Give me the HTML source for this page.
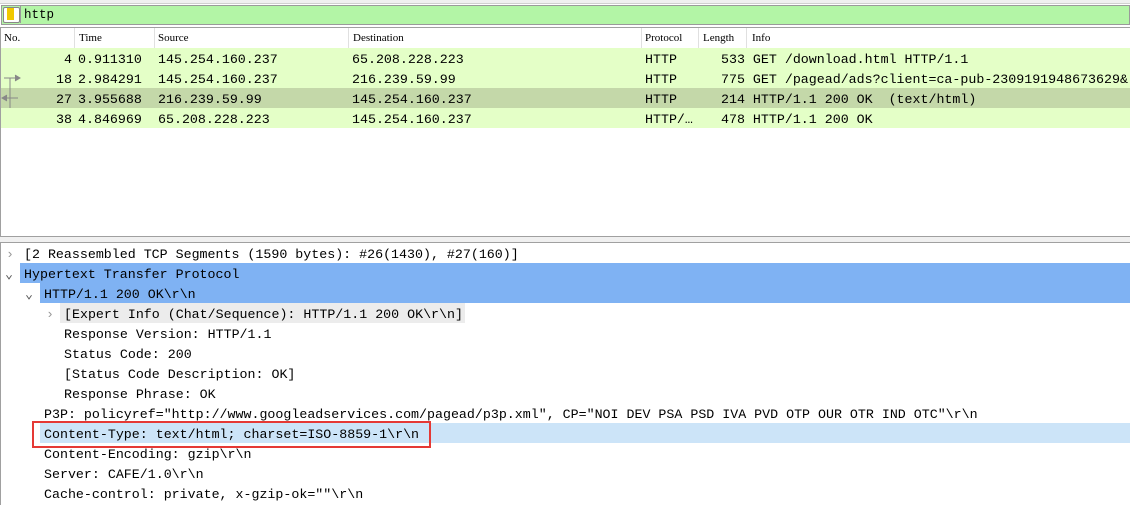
<!DOCTYPE html><html><head><style>
body{margin:0;width:1130px;height:505px;overflow:hidden;background:#fff;font-family:"Liberation Mono",monospace;font-size:13.3px;color:#000;position:relative}
.a{position:absolute}
.mono{font-family:"Liberation Mono",monospace;font-size:13.3px}
.mono span{white-space:pre}
.r{position:relative;height:20px}
.hd{font-family:"Liberation Serif","Noto Serif CJK SC",serif;font-size:11px}
</style></head><body>
<div class="a" style="left:0;top:0;width:1130px;height:3px;background:#f0f0f0;border-bottom:1px solid #d0d0d0"></div>
<div class="a" style="left:1px;top:5px;width:1127px;height:18px;background:#b3f5a6;border:1px solid #9a9a9a"></div>
<div class="a" style="left:3px;top:7px;width:15px;height:14px;background:#fff;border:1px solid #888;border-radius:2px"></div>
<div class="a" style="left:7px;top:8px;width:7px;height:12px;background:#f0c800"></div>
<div class="a" style="left:20px;top:6px;width:1px;height:17px;background:#999"></div>
<div class="a mono" style="left:24px;top:7px;line-height:17px;font-size:12.5px"><span>http</span></div>
<div class="a" style="left:0;top:27px;width:1130px;height:210px;border-top:1px solid #a0a0a0;border-left:1px solid #a0a0a0;box-sizing:border-box"></div>
<div class="a hd" style="left:0;top:28px;width:1130px;height:20px;line-height:20px">
<span class="a" style="left:4px">No.</span><span class="a" style="left:79px">Time</span><span class="a" style="left:158px">Source</span><span class="a" style="left:353px">Destination</span><span class="a" style="left:645px">Protocol</span><span class="a" style="left:703px">Length</span><span class="a" style="left:752px">Info</span>
<span class="a" style="left:74px;top:0;width:1px;height:20px;background:#e0e0e0"></span><span class="a" style="left:154px;width:1px;height:20px;background:#e0e0e0"></span><span class="a" style="left:348px;width:1px;height:20px;background:#e0e0e0"></span><span class="a" style="left:641px;width:1px;height:20px;background:#e0e0e0"></span><span class="a" style="left:698px;width:1px;height:20px;background:#e0e0e0"></span><span class="a" style="left:746px;width:1px;height:20px;background:#e0e0e0"></span>
</div>
<div class="a" style="left:1px;top:48px;width:1129px;height:80px;background:#e4ffc7"></div>
<div class="a" style="left:1px;top:88px;width:1129px;height:20px;background:#c4d8a9"></div>
<div class="a mono" style="left:0;top:50px;line-height:20px;width:1130px"><div class="r"><span class="a" style="right:1058px">4</span><span class="a" style="left:78px">0.911310</span><span class="a" style="left:158px">145.254.160.237</span><span class="a" style="left:352px">65.208.228.223</span><span class="a" style="left:645px">HTTP</span><span class="a" style="left:721px">533 GET /download.html HTTP/1.1</span></div><div class="r"><span class="a" style="right:1058px">18</span><span class="a" style="left:78px">2.984291</span><span class="a" style="left:158px">145.254.160.237</span><span class="a" style="left:352px">216.239.59.99</span><span class="a" style="left:645px">HTTP</span><span class="a" style="left:721px">775 GET /pagead/ads?client=ca-pub-2309191948673629&amp;</span></div><div class="r"><span class="a" style="right:1058px">27</span><span class="a" style="left:78px">3.955688</span><span class="a" style="left:158px">216.239.59.99</span><span class="a" style="left:352px">145.254.160.237</span><span class="a" style="left:645px">HTTP</span><span class="a" style="left:721px">214 HTTP/1.1 200 OK  (text/html)</span></div><div class="r"><span class="a" style="right:1058px">38</span><span class="a" style="left:78px">4.846969</span><span class="a" style="left:158px">65.208.228.223</span><span class="a" style="left:352px">145.254.160.237</span><span class="a" style="left:645px">HTTP/…</span><span class="a" style="left:721px">478 HTTP/1.1 200 OK</span></div></div>
<svg class="a" style="left:0;top:68px" width="22" height="40"><g stroke="#888" fill="none"><path d="M10 10V40M4 10H18"/><path d="M15 7L20 10L15 13" fill="#888"/><path d="M3 30H18M7 27L2 30L7 33" fill="#888"/></g></svg>
<div class="a" style="left:0;top:236px;width:1130px;height:5px;background:#f0f0f0;border-top:1px solid #a0a0a0;border-bottom:1px solid #a0a0a0"></div>
<div class="a" style="left:0;top:242px;width:1px;height:263px;background:#a0a0a0"></div>
<div class="a" style="left:20px;top:263px;width:1110px;height:20px;background:#7fb2f3"></div>
<div class="a" style="left:40px;top:283px;width:1090px;height:20px;background:#7fb2f3"></div>
<div class="a" style="left:60px;top:303px;width:405px;height:20px;background:#ececec"></div>
<div class="a" style="left:40px;top:423px;width:1090px;height:20px;background:#cce4f8"></div>
<div class="a" style="left:32px;top:421px;width:395px;height:23px;border:2px solid #e53935"></div>
<div class="a mono" style="left:0;top:245px;line-height:20px;width:1130px"><div class="r"><span class="a" style="left:6px;color:#999">›</span><span class="a" style="left:24px">[2 Reassembled TCP Segments (1590 bytes): #26(1430), #27(160)]</span></div><div class="r"><span class="a" style="left:5px;color:#555">⌄</span><span class="a" style="left:24px">Hypertext Transfer Protocol</span></div><div class="r"><span class="a" style="left:25px;color:#555">⌄</span><span class="a" style="left:44px">HTTP/1.1 200 OK\r\n</span></div><div class="r"><span class="a" style="left:46px;color:#999">›</span><span class="a" style="left:64px">[Expert Info (Chat/Sequence): HTTP/1.1 200 OK\r\n]</span></div><div class="r"><span class="a" style="left:64px">Response Version: HTTP/1.1</span></div><div class="r"><span class="a" style="left:64px">Status Code: 200</span></div><div class="r"><span class="a" style="left:64px">[Status Code Description: OK]</span></div><div class="r"><span class="a" style="left:64px">Response Phrase: OK</span></div><div class="r"><span class="a" style="left:44px">P3P: policyref="http://www.googleadservices.com/pagead/p3p.xml", CP="NOI DEV PSA PSD IVA PVD OTP OUR OTR IND OTC"\r\n</span></div><div class="r"><span class="a" style="left:44px">Content-Type: text/html; charset=ISO-8859-1\r\n</span></div><div class="r"><span class="a" style="left:44px">Content-Encoding: gzip\r\n</span></div><div class="r"><span class="a" style="left:44px">Server: CAFE/1.0\r\n</span></div><div class="r"><span class="a" style="left:44px">Cache-control: private, x-gzip-ok=""\r\n</span></div></div>
</body></html>
